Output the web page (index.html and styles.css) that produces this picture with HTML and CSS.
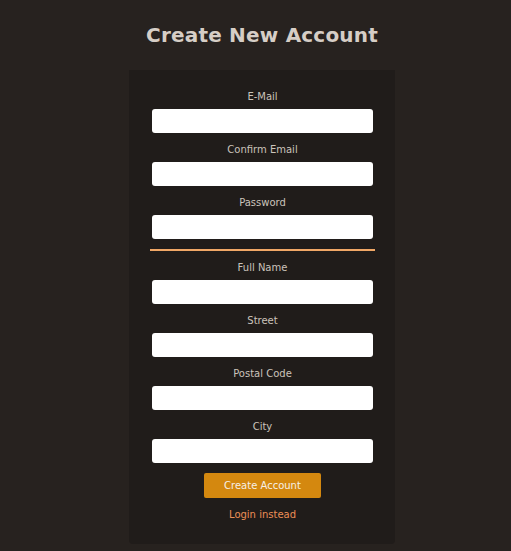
FILE: index.html
```html
<!DOCTYPE html>
<html lang="en">
<head>
<meta charset="utf-8">
<title>Create New Account</title>
<link rel="stylesheet" href="styles.css">
</head>
<body>
<main class="page">
  <h1 class="title">Create New Account</h1>
  <form class="card">
    <div class="field">
      <label class="label" for="email">E-Mail</label>
      <input class="input" id="email" type="email">
    </div>
    <div class="field">
      <label class="label" for="confirm">Confirm Email</label>
      <input class="input" id="confirm" type="email">
    </div>
    <div class="field">
      <label class="label" for="password">Password</label>
      <input class="input" id="password" type="password">
    </div>
    <hr class="divider">
    <div class="field">
      <label class="label" for="name">Full Name</label>
      <input class="input" id="name" type="text">
    </div>
    <div class="field">
      <label class="label" for="street">Street</label>
      <input class="input" id="street" type="text">
    </div>
    <div class="field">
      <label class="label" for="postal">Postal Code</label>
      <input class="input" id="postal" type="text">
    </div>
    <div class="field">
      <label class="label" for="city">City</label>
      <input class="input" id="city" type="text">
    </div>
    <button class="btn" type="button">Create Account</button>
    <a class="link" href="#">Login instead</a>
  </form>
</main>
</body>
</html>
```
FILE: styles.css
```css
html, body {
  margin: 0;
  padding: 0;
  background: #27221f;
  height: 100%;
}
body {
  font-family: "DejaVu Sans", "Open Sans", sans-serif;
}
.page {
  display: flex;
  flex-direction: column;
  align-items: center;
  padding-left: 13px;
}
.title {
  margin: 0;
  height: 70px;
  line-height: 70px;
  font-size: 20px;
  font-weight: bold;
  color: #d6cec6;
  letter-spacing: 0.2px;
}
.card {
  width: 266px;
  box-sizing: border-box;
  background: #201c1a;
  border-radius: 0 0 4px 4px;
  padding: 20px 22px 22px 23px;
  display: flex;
  flex-direction: column;
  align-items: center;
}
.field {
  display: flex;
  flex-direction: column;
  align-items: center;
  width: 100%;
  margin-bottom: 10px;
}
.label {
  font-size: 10px;
  line-height: 14px;
  color: #cbc3bb;
  margin-bottom: 5px;
}
.input {
  width: 221px;
  height: 24px;
  box-sizing: border-box;
  border: none;
  border-radius: 3px;
  background: #ffffff;
  margin: 0;
}
.divider {
  width: 225px;
  height: 2px;
  border: none;
  background: #f0a766;
  margin: 0 0 10px 0;
}
.btn {
  margin: 0;
  width: 117px;
  height: 25px;
  border: none;
  border-radius: 2px;
  background: #d4880f;
  color: #f6efe6;
  font-family: inherit;
  font-size: 10px;
}
.link {
  margin-top: 10px;
  font-size: 10px;
  line-height: 14px;
  color: #ec8e56;
  text-decoration: none;
}
```
